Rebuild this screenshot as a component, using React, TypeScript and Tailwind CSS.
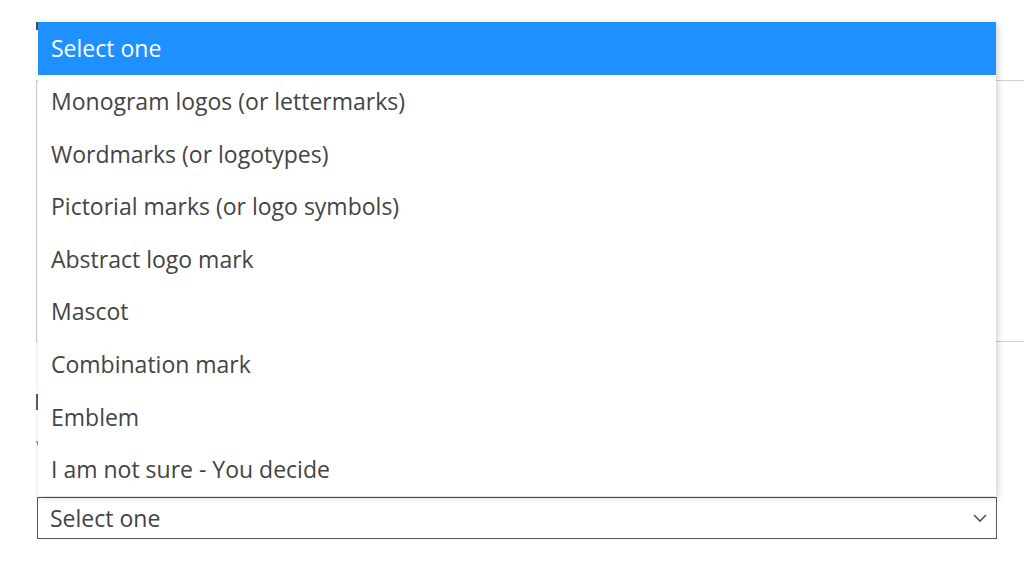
import React from "react";

const options = [
  "Monogram logos (or lettermarks)",
  "Wordmarks (or logotypes)",
  "Pictorial marks (or logo symbols)",
  "Abstract logo mark",
  "Mascot",
  "Combination mark",
  "Emblem",
  "I am not sure - You decide",
];

export default function App() {
  return (
    <div
      className="relative w-[1024px] h-[564px] overflow-hidden bg-white"
      style={{ fontFamily: '"Open Sans", "Noto Sans", sans-serif' }}
    >
      {/* underlying form */}
      <div className="flex flex-col pl-[36px] pt-[22px]">
        <div className="h-[8px] w-[3px] bg-[#5a4a40]" />
        <div className="mt-[50px] h-[262px] w-[1100px] border border-[#cfcfcf]" />
        <div className="mt-[52px] h-[16px] w-[3px] bg-[#6b5a50]" />
        <div className="mt-[28px] text-[20px] leading-[20px] text-[#888]">V</div>
        <div className="mt-[39px] ml-[1px] flex h-[42px] w-[960px] items-center justify-between border-[1.5px] border-[#555] bg-white pl-[12px] pr-[8px] text-[23px] text-[#444]">
          <span>Select one</span>
          <svg width="16" height="10" viewBox="0 0 16 10" fill="none">
            <path d="M2 2 L8 8 L14 2" stroke="#555" strokeWidth="1.6" />
          </svg>
        </div>
      </div>

      {/* open dropdown list */}
      <div className="absolute left-[38px] top-[22px] w-[958px] bg-white shadow-[2px_2px_6px_rgba(0,0,0,0.18)]">
        <div className="flex h-[53px] items-center bg-[#1e90ff] pl-[13px] text-[23px] text-white">
          Select one
        </div>
        {options.map((o) => (
          <div
            key={o}
            className="flex h-[52.6px] items-center pl-[13px] text-[23px] text-[#444]"
          >
            {o}
          </div>
        ))}
      </div>
    </div>
  );
}
